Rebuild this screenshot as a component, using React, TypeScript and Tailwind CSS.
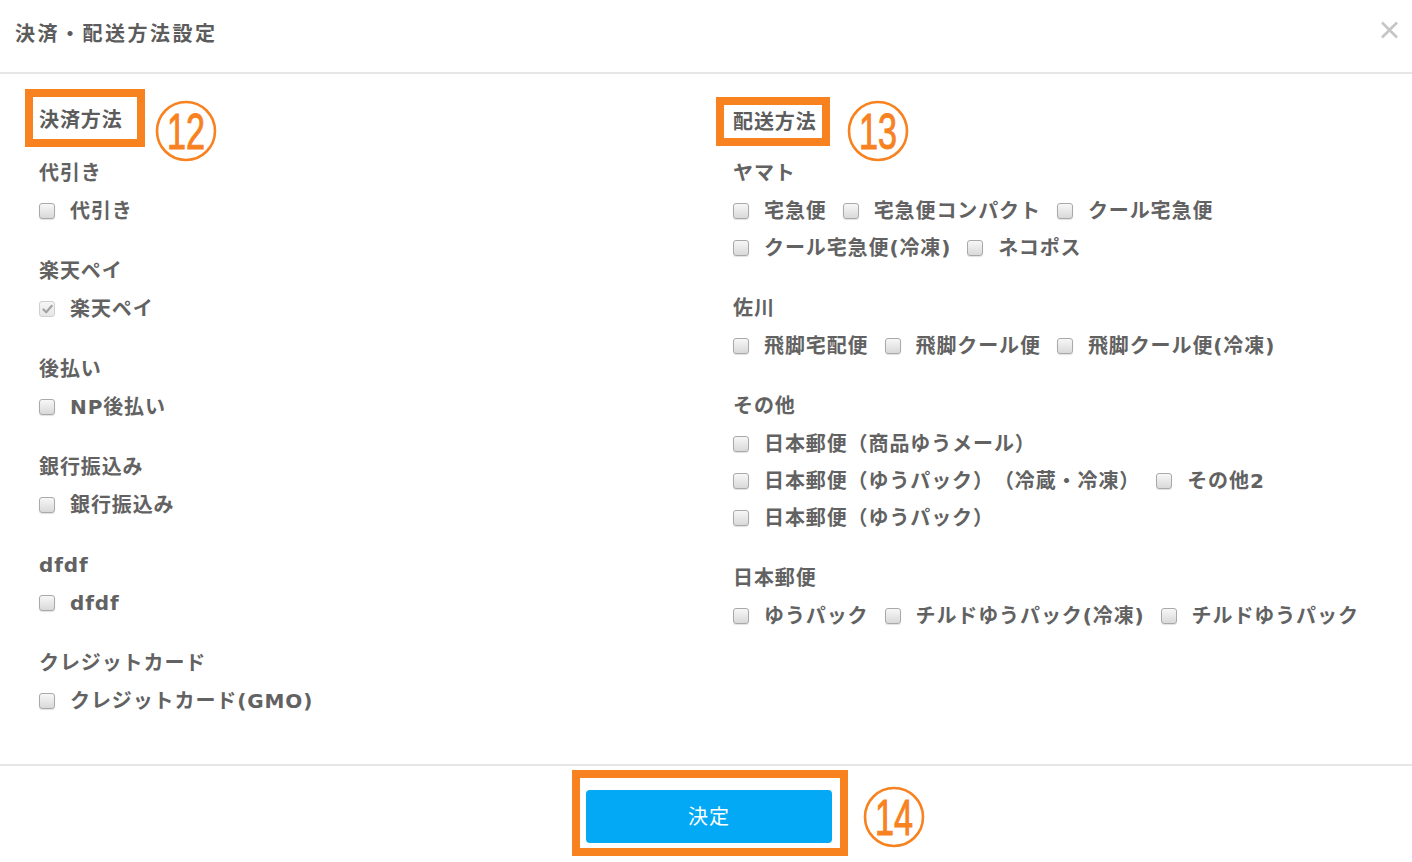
import React from "react";

const FONT = {
  fontFamily: '"DejaVu Sans", "Noto Sans CJK JP", sans-serif',
};

type Section = { title: string; rows: string[][]; checked?: string[] };

const payment: Section[] = [
  { title: "代引き", rows: [["代引き"]] },
  { title: "楽天ペイ", rows: [["楽天ペイ"]], checked: ["楽天ペイ"] },
  { title: "後払い", rows: [["NP後払い"]] },
  { title: "銀行振込み", rows: [["銀行振込み"]] },
  { title: "dfdf", rows: [["dfdf"]] },
  { title: "クレジットカード", rows: [["クレジットカード(GMO)"]] },
];

const delivery: Section[] = [
  {
    title: "ヤマト",
    rows: [
      ["宅急便", "宅急便コンパクト", "クール宅急便"],
      ["クール宅急便(冷凍)", "ネコポス"],
    ],
  },
  { title: "佐川", rows: [["飛脚宅配便", "飛脚クール便", "飛脚クール便(冷凍)"]] },
  {
    title: "その他",
    rows: [
      ["日本郵便（商品ゆうメール）"],
      ["日本郵便（ゆうパック）（冷蔵・冷凍）", "その他2"],
      ["日本郵便（ゆうパック）"],
    ],
  },
  { title: "日本郵便", rows: [["ゆうパック", "チルドゆうパック(冷凍)", "チルドゆうパック"]] },
];

function CircleNum({ n }: { n: string }) {
  return (
    <svg width="62" height="62" viewBox="0 0 62 62" className="shrink-0 overflow-visible">
      <circle cx="31" cy="31" r="29" fill="none" stroke="#f7821f" strokeWidth="2.6" />
      <text
        x="31"
        y="49"
        textAnchor="middle"
        fontFamily='"Liberation Sans", Arial, sans-serif'
        fontSize="50"
        fill="#f7821f"
        stroke="#f7821f"
        strokeWidth="1"
        textLength="38"
        lengthAdjust="spacingAndGlyphs"
      >
        {n}
      </text>
    </svg>
  );
}

function Checkbox({ checked }: { checked?: boolean }) {
  if (checked) {
    return (
      <span className="w-[16px] h-[16px] shrink-0 rounded-[3px] border border-[#cfcfcf] bg-gradient-to-b from-[#f6f6f6] to-[#e6e6e6] flex items-center justify-center">
        <svg width="11" height="10" viewBox="0 0 11 10">
          <path d="M1.5 5.5 L4.2 8.2 L9.8 1.8" fill="none" stroke="#a3a3a3" strokeWidth="2.2" strokeLinecap="round" strokeLinejoin="round" />
        </svg>
      </span>
    );
  }
  return (
    <span className="w-[16px] h-[16px] shrink-0 rounded-[3px] border border-[#a9a9a9] bg-gradient-to-b from-[#f7f7f7] to-[#d9d9d9] shadow-[0_1px_1px_rgba(0,0,0,0.12)]" />
  );
}

function SectionBlock({ s }: { s: Section }) {
  return (
    <div className="mb-[23px]">
      <div className="h-[38px] flex items-center text-[20px] font-semibold text-[#626262] tracking-[0.9px]">
        {s.title}
      </div>
      {s.rows.map((row, i) => (
        <div key={i} className="h-[37px] flex items-center">
          {row.map((label) => (
            <label key={label} className="flex items-center gap-[15px] mr-[16px] text-[20px] font-semibold text-[#626262] tracking-[0.9px] whitespace-nowrap">
              <Checkbox checked={s.checked?.includes(label)} />
              <span>{label}</span>
            </label>
          ))}
        </div>
      ))}
    </div>
  );
}

export default function App() {
  return (
    <div className="w-[1412px] h-[862px] bg-white overflow-hidden [text-spacing-trim:space-all]" style={FONT}>
      {/* header */}
      <div className="h-[74px] border-b-2 border-[#e6e6e6] flex justify-between">
        <h1 className="pl-[15px] pt-[19px] text-[20px] font-semibold text-[#5c5c5c] tracking-[2.5px]">
          決済・配送方法設定
        </h1>
        <button className="mt-[21px] mr-[13px] self-start">
          <svg width="19" height="18" viewBox="0 0 19 18">
            <path d="M2 1.5 L17 16.5 M17 1.5 L2 16.5" stroke="#c6c6c6" strokeWidth="2.6" />
          </svg>
        </button>
      </div>

      {/* body */}
      <div className="pt-[17px] pl-[39px] pb-[22px] grid grid-cols-[694px_1fr]">
        <div>
          <div className="h-[65px] flex items-start -ml-[14px] -mt-[2px]">
            <div className="h-[58px] border-8 border-[#f7821f] pl-[6px] pr-[14px] pt-[3px] flex items-center text-[20px] font-semibold text-[#5c5c5c] tracking-[0.9px]">
              決済方法
            </div>
            <div className="ml-[10px] mt-[11px]">
              <CircleNum n="12" />
            </div>
          </div>
          {payment.map((s) => (
            <SectionBlock key={s.title} s={s} />
          ))}
        </div>
        <div>
          <div className="h-[65px] flex items-start -ml-[17px] -mt-[2px]">
            <div className="mt-[8px] h-[49px] border-8 border-[#f7821f] pl-[9px] pr-[5px] flex items-center text-[20px] font-semibold text-[#5c5c5c] tracking-[0.9px]">
              配送方法
            </div>
            <div className="ml-[17px] mt-[11px]">
              <CircleNum n="13" />
            </div>
          </div>
          {delivery.map((s) => (
            <SectionBlock key={s.title} s={s} />
          ))}
        </div>
      </div>

      {/* footer */}
      <div className="border-t-2 border-[#e6e6e6] pt-[4px] flex justify-center">
        <div className="relative ml-[8px]">
          <div className="border-8 border-[#f7821f] pt-[12px] pb-[5px] pl-[6px] pr-[8px]">
            <button className="w-[246px] h-[53px] rounded-[4px] bg-[#03a9f4] text-white text-[20px] tracking-[1px]">
              決定
            </button>
          </div>
          <div className="absolute left-[291px] top-[16px]">
            <CircleNum n="14" />
          </div>
        </div>
      </div>
    </div>
  );
}
